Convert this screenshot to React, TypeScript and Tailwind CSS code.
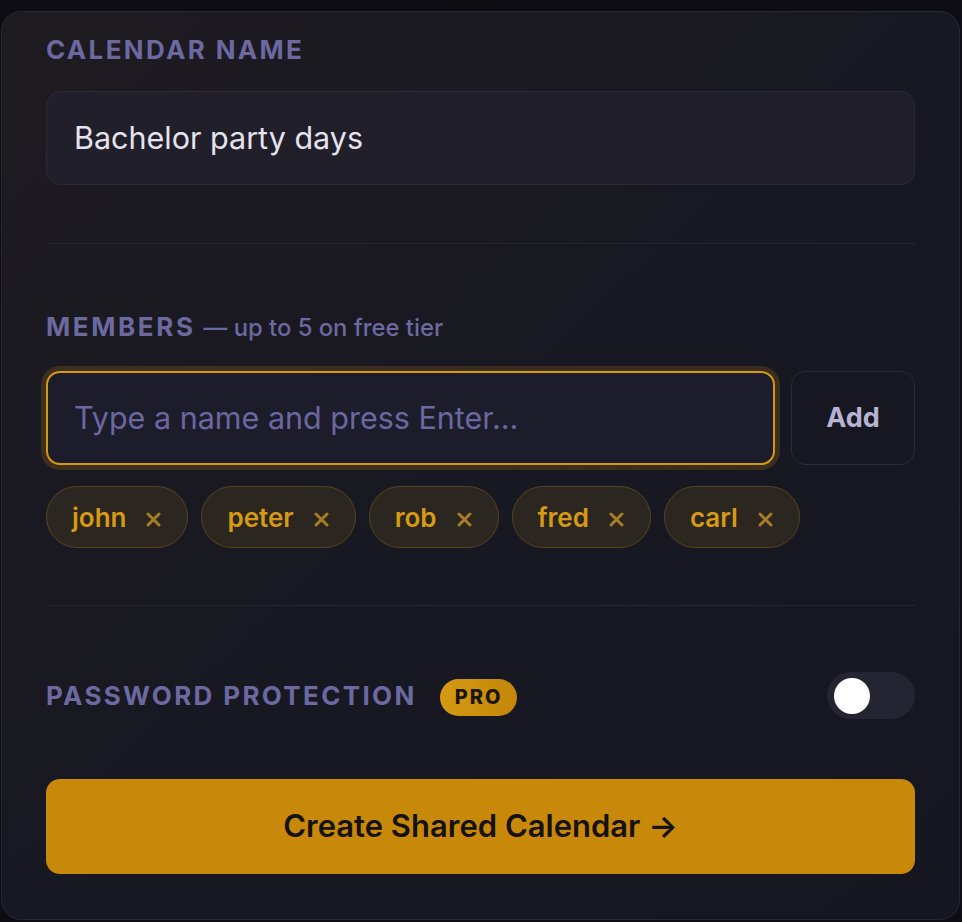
import React from "react";

const chips = ["john", "peter", "rob", "fred", "carl"];

export default function App() {
  return (
    <div
      className="min-h-[922px] w-[962px] bg-[#0d0c12] pt-[11px] pl-[1px] pr-[2px] pb-[2px]"
      style={{ fontFamily: "Inter, 'Noto Sans', sans-serif" }}
    >
      <div className="h-[909px] rounded-[20px] border border-[#282736] bg-gradient-to-br from-[#1e1b20] via-[#181822] to-[#161620] px-[44px] pt-[22px]">
        {/* Calendar name */}
        <div className="text-[26px] leading-[32px] font-bold tracking-[0.09em] text-[#6c68a0]">
          CALENDAR NAME
        </div>
        <div className="mt-[25px] flex h-[94px] items-center rounded-[14px] border border-[#2b2937] bg-gradient-to-r from-[#211f29] to-[#1f1e2a] px-[27px] text-[30.5px] text-[#e5e3ee]">
          Bachelor party days
        </div>

        <div className="mt-[58px] h-px bg-[#252431]" />

        {/* Members */}
        <div className="mt-[67px] flex items-baseline text-[26px] leading-[32px] text-[#6c68a0]">
          <span className="font-bold tracking-[0.1em]">MEMBERS</span>
          <span className="ml-[8px] text-[23.8px] font-medium">— up to 5 on free tier</span>
        </div>
        <div className="mt-[27px] flex gap-[16px]">
          <div className="flex h-[94px] flex-1 items-center rounded-[14px] border-2 border-[#d6980f] bg-[#1c1c2a] px-[26px] text-[30.5px] text-[#6b67a1] shadow-[0_0_0_5px_rgba(214,152,15,0.18)]">
            Type a name and press Enter...
          </div>
          <div className="flex h-[94px] w-[124px] items-center justify-center rounded-[14px] border border-[#2a2a38] bg-[#171722] text-[27px] font-bold text-[#b7b3d4]">
            Add
          </div>
        </div>
        <div className="mt-[21px] flex gap-[13px]">
          {chips.map((c) => (
            <div
              key={c}
              className="flex h-[62px] items-center gap-[20px] rounded-full border border-[#54441f] bg-[#2b261f] pl-[25px] pr-[26px] text-[26px] font-semibold text-[#d79b12]"
            >
              <span>{c}</span>
              <svg width="15" height="15" viewBox="0 0 15 15" className="mt-[4px]">
                <path d="M2 2 L13 13 M13 2 L2 13" stroke="#a67c26" strokeWidth="3" strokeLinecap="round" />
              </svg>
            </div>
          ))}
        </div>

        <div className="mt-[57px] h-px bg-[#252431]" />

        {/* Password */}
        <div className="mt-[66px] flex items-center justify-between">
          <div className="flex items-center gap-[23px]">
            <span className="text-[26px] leading-[32px] font-bold tracking-[0.09em] text-[#6c68a0]">
              PASSWORD PROTECTION
            </span>
            <span className="mt-[3px] flex h-[37px] items-center rounded-full bg-gradient-to-r from-[#d59a12] to-[#c3860a] px-[15px] text-[20px] font-extrabold tracking-[0.1em] text-[#1b150b]">
              PRO
            </span>
          </div>
          <div className="flex h-[47px] w-[88px] items-center rounded-full bg-[#242433] pl-[7px]">
            <div className="h-[36px] w-[36px] rounded-full bg-white" />
          </div>
        </div>

        <div className="mt-[60px] flex h-[95px] items-center justify-center rounded-[14px] bg-[#c8880a] text-[31px] font-semibold text-[#15120d]">
          Create Shared Calendar →
        </div>
      </div>
    </div>
  );
}
